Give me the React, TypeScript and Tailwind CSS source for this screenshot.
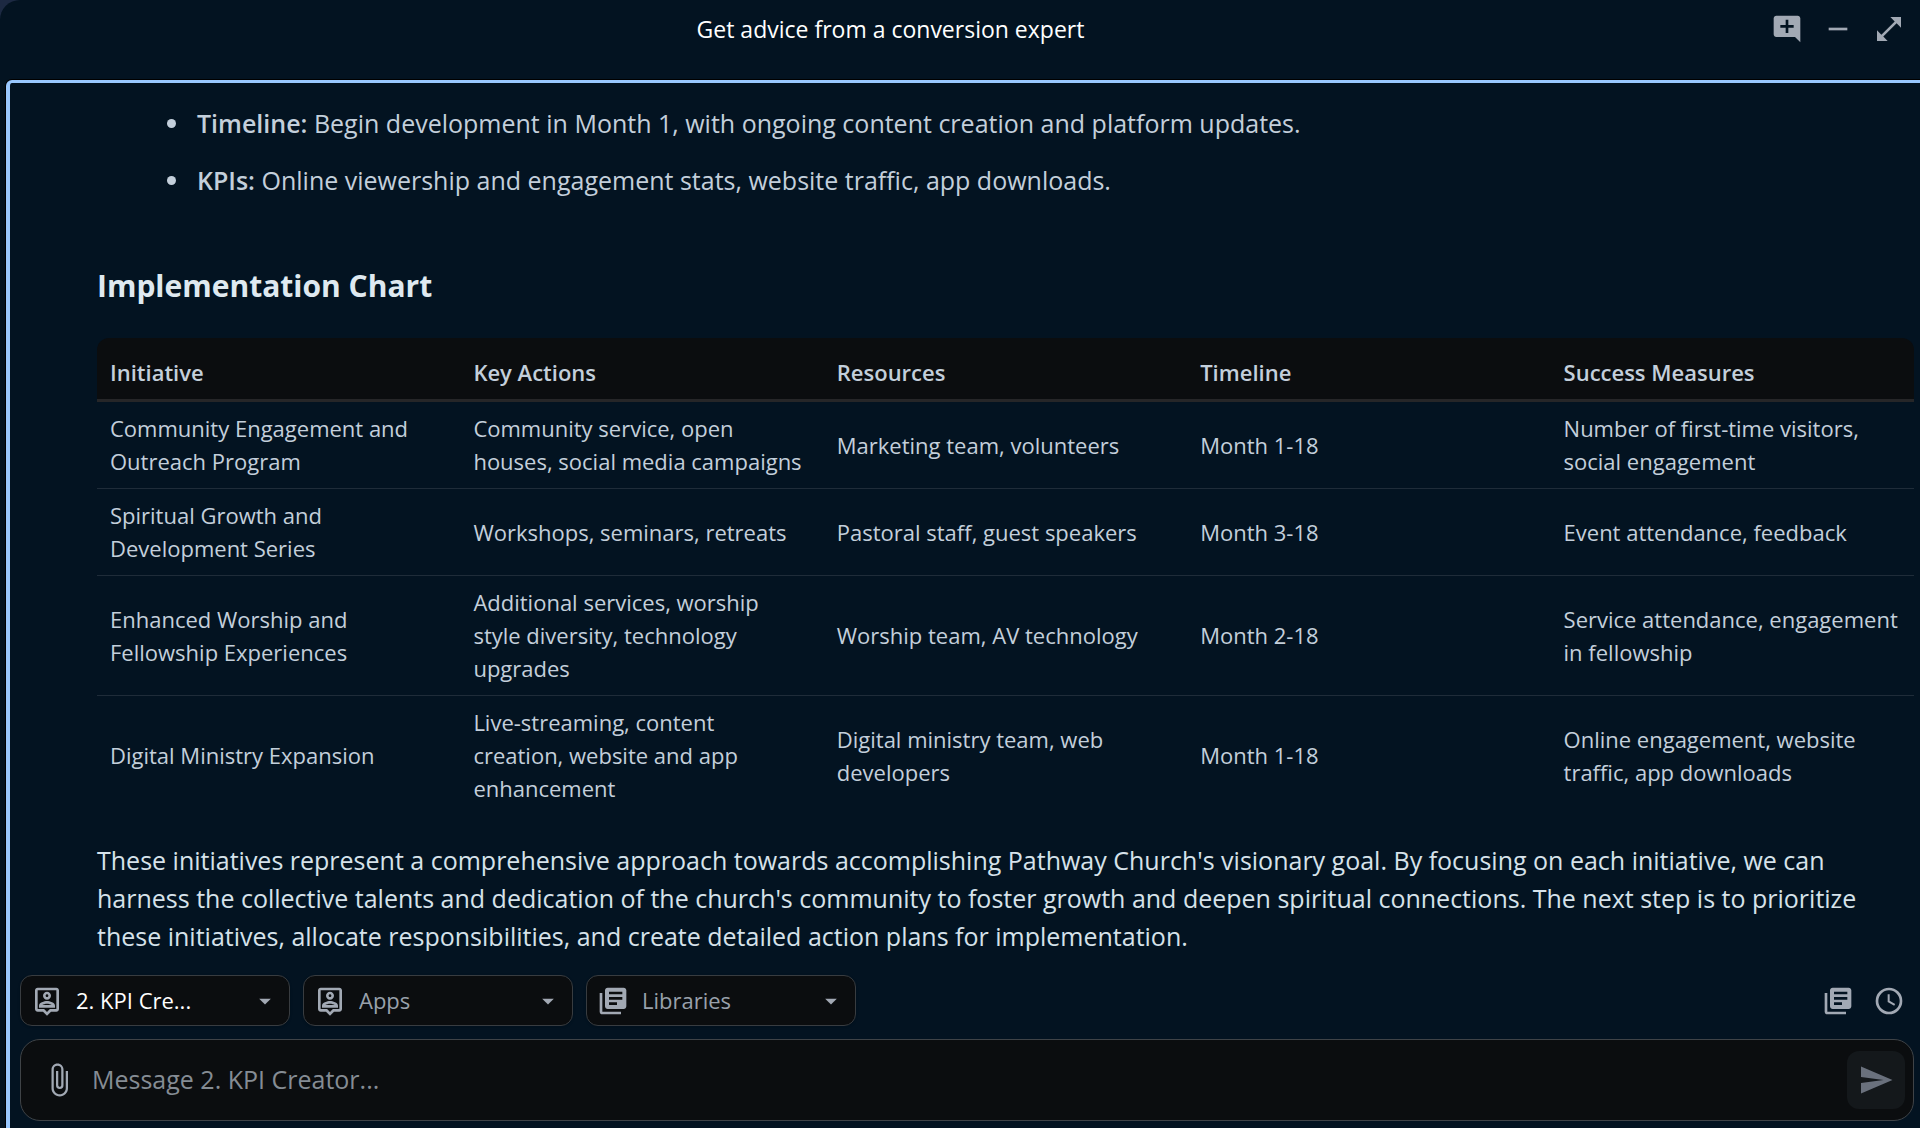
import {
  MdAddComment,
  MdArrowDropDown,
  MdAttachFile,
  MdLibraryBooks,
  MdOpenInFull,
  MdRemove,
  MdSend,
} from "react-icons/md"

const columns = ["Initiative", "Key Actions", "Resources", "Timeline", "Success Measures"]

const rows = [
  [
    "Community Engagement and Outreach Program",
    "Community service, open houses, social media campaigns",
    "Marketing team, volunteers",
    "Month 1-18",
    "Number of first-time visitors, social engagement",
  ],
  [
    "Spiritual Growth and Development Series",
    "Workshops, seminars, retreats",
    "Pastoral staff, guest speakers",
    "Month 3-18",
    "Event attendance, feedback",
  ],
  [
    "Enhanced Worship and Fellowship Experiences",
    "Additional services, worship style diversity, technology upgrades",
    "Worship team, AV technology",
    "Month 2-18",
    "Service attendance, engagement in fellowship",
  ],
  [
    "Digital Ministry Expansion",
    "Live-streaming, content creation, website and app enhancement",
    "Digital ministry team, web developers",
    "Month 1-18",
    "Online engagement, website traffic, app downloads",
  ],
]

function PersonPinIcon({ className }: { className?: string }) {
  return (
    <svg viewBox="0 0 24 24" fill="currentColor" className={className} aria-hidden="true">
      <path d="M19 2H5c-1.1 0-2 .9-2 2v14c0 1.1.9 2 2 2h4l3 3 3-3h4c1.1 0 2-.9 2-2V4c0-1.1-.9-2-2-2zm0 16h-4.83l-.59.59L12 20.17l-1.59-1.59-.58-.58H5V4h14v14zM12 11c1.65 0 3-1.35 3-3s-1.35-3-3-3-3 1.35-3 3 1.35 3 3 3zm0-4c.55 0 1 .45 1 1s-.45 1-1 1-1-.45-1-1 .45-1 1-1zm6 8.58c0-2.5-3.97-3.58-6-3.58s-6 1.08-6 3.58V17h12v-1.42zM8.48 15c.74-.51 2.23-1 3.52-1s2.78.49 3.52 1H8.48z" />
    </svg>
  )
}

function ClockIcon({ className }: { className?: string }) {
  return (
    <svg viewBox="0 0 24 24" fill="none" stroke="currentColor" className={className} aria-hidden="true">
      <circle cx="12" cy="12" r="9" strokeWidth="2" />
      <path d="M11.75 7v5.3l4.5 2.6" strokeWidth="1.5" />
    </svg>
  )
}

function Header() {
  return (
    <header className="relative flex h-20 shrink-0 items-start justify-end pt-[13px] pr-[15px] pl-4">
      <h1 className="absolute inset-x-0 top-[13px] pr-[139px] text-center text-[23px] leading-8 text-white">
        Get advice from a conversion expert
      </h1>
      <div className="relative flex gap-[19px] text-[#a2a9b4]">
        <button type="button" aria-label="New chat">
          <MdAddComment className="size-8" />
        </button>
        <button type="button" aria-label="Minimize">
          <MdRemove className="size-8" />
        </button>
        <button type="button" aria-label="Expand">
          <MdOpenInFull className="size-8" />
        </button>
      </div>
    </header>
  )
}

function InitiativeTable() {
  return (
    <table className="mt-8 w-full table-fixed border-separate border-spacing-0 text-left text-[22px] leading-[33px] text-[#c3cfdb]">
      <thead>
        <tr>
          {columns.map((column) => (
            <th
              key={column}
              className="border-b-[3px] border-[#262628] bg-[#0b0d0f] px-[13px] pt-[18px] pb-[10px] font-semibold first:rounded-tl-xl last:rounded-tr-xl"
            >
              {column}
            </th>
          ))}
        </tr>
      </thead>
      <tbody>
        {rows.map((row) => (
          <tr key={row[0]} className="group">
            {row.map((cell, i) => (
              <td
                key={i}
                className="border-b border-[#1f2c39] py-[10px] pr-5 pl-[13px] align-middle group-last:border-b-0 last:pr-2.5"
              >
                {cell}
              </td>
            ))}
          </tr>
        ))}
      </tbody>
    </table>
  )
}

function Picker({ label, kind, active }: { label: string; kind: "person" | "library"; active?: boolean }) {
  return (
    <div
      className={`relative flex h-[51px] w-[270px] items-center rounded-xl border border-[#383c40] bg-[#0b0d0f] shadow-sm ${
        active ? "text-white" : "text-[#99a1ab]"
      }`}
    >
      <span className="pointer-events-none absolute left-2.5 text-[#a2a9b4]">
        {kind === "person" ? <PersonPinIcon className="size-8" /> : <MdLibraryBooks className="size-8" />}
      </span>
      <select aria-label={label} className="h-full w-full appearance-none bg-transparent pr-12 pl-[55px] text-[22px] outline-none">
        <option>{label}</option>
      </select>
      <MdArrowDropDown className="pointer-events-none absolute right-2.5 size-7 text-[#a2a9b4]" />
    </div>
  )
}

function Composer() {
  return (
    <form className="mt-[13px] flex h-[82px] items-center rounded-[20px] border border-[#3f4347] bg-[#0b0d0f] pr-2 pl-5">
      <button type="button" aria-label="Attach file" className="text-[#a2a9b4]">
        <MdAttachFile className="size-9" />
      </button>
      <input
        type="text"
        aria-label="Message"
        placeholder="Message 2. KPI Creator..."
        className="min-w-0 flex-1 bg-transparent px-[15px] text-[25px] text-white outline-none placeholder:text-[#858c94]"
      />
      <button type="submit" aria-label="Send" className="flex size-[58px] items-center justify-center rounded-xl bg-[#14181b] text-[#6a717d]">
        <MdSend className="size-9" />
      </button>
    </form>
  )
}

export default function App() {
  return (
    <div className="h-screen overflow-hidden bg-[#1c2942] font-['Open_Sans',sans-serif]">
      <div className="flex h-full flex-col rounded-tl-[20px] bg-[#031321]">
        <Header />
        <main className="ml-1.5 flex min-h-0 flex-1 flex-col rounded-tl-md border-t-[3px] border-l-4 border-[#99c8ff] shadow-[0_0_0_1px_#000]">
          <section className="min-h-0 flex-1 overflow-hidden pr-1.5 pl-[87px] text-[25px] leading-[38px]">
            <ul className="list-disc space-y-[19px] pt-[21px] pl-[95px] text-[#c3cfdb]">
              <li className="pl-[5px]">
                <strong className="font-semibold">Timeline:</strong> Begin development in Month 1, with ongoing content
                creation and platform updates.
              </li>
              <li className="pl-[5px]">
                <strong className="font-semibold">KPIs:</strong> Online viewership and engagement stats, website
                traffic, app downloads.
              </li>
            </ul>
            <h3 className="mt-[67px] text-[30px] leading-10 font-bold text-[#dfe9f0]">Implementation Chart</h3>
            <InitiativeTable />
            <p className="mt-[26px] text-[#d6e2ea]">
              These initiatives represent a comprehensive approach towards accomplishing Pathway Church's visionary
              goal. By focusing on each initiative, we can harness the collective talents and dedication of the
              church's community to foster growth and deepen spiritual connections. The next step is to prioritize
              these initiatives, allocate responsibilities, and create detailed action plans for implementation.
            </p>
          </section>
          <footer className="shrink-0 pt-6 pr-1.5 pb-[7px] pl-2.5">
            <div className="flex items-center gap-[13px]">
              <Picker label="2. KPI Cre..." kind="person" active />
              <Picker label="Apps" kind="person" />
              <Picker label="Libraries" kind="library" />
              <div className="ml-auto flex gap-[19px] pr-[9px] text-[#a2a9b4]">
                <button type="button" aria-label="Prompt library">
                  <MdLibraryBooks className="size-8" />
                </button>
                <button type="button" aria-label="History">
                  <ClockIcon className="size-8" />
                </button>
              </div>
            </div>
            <Composer />
          </footer>
        </main>
      </div>
    </div>
  )
}
